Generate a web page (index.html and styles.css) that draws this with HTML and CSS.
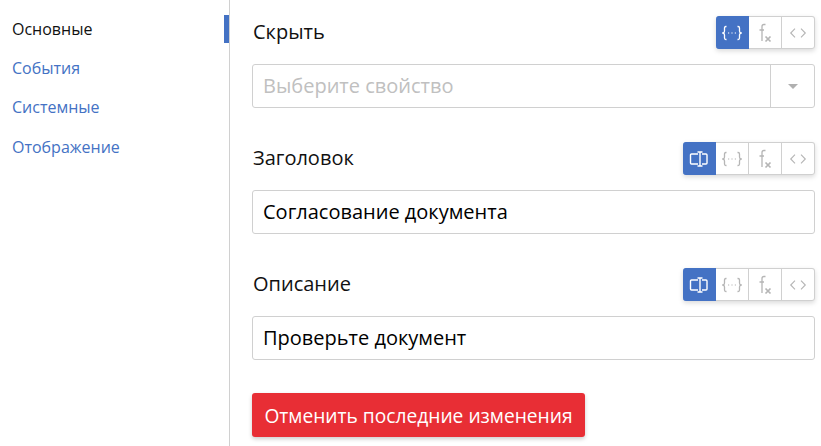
FILE: index.html
```html
<!DOCTYPE html>
<html>
<head>
    <title>Свойства</title>
    <link rel="stylesheet" href="styles.css">
</head>
<body>
    <svg class="icon-defs" width="0" height="0">
        <symbol id="icon-text" viewBox="0 0 20 16">
            <path d="M9 3H2.500a1 1 0 0 0-1 1v8a1 1 0 0 0 1 1H9M13 3h4a1 1 0 0 1 1 1v8a1 1 0 0 1-1 1h-4M8.500 1h5M8.500 15h5M11 1v14" fill="none" stroke="currentColor" stroke-width="1.400"/>
        </symbol>
        <symbol id="icon-var" viewBox="0 0 20 16">
            <path d="M4.500 1.500H3.900C2.900 1.500 2.500 2 2.500 3v3c0 1-.4 1.700-1.500 2 1.100.3 1.500 1 1.500 2v3c0 1 .4 1.500 1.400 1.500h.6M15.500 1.500h.6c1 0 1.400.5 1.400 1.500v3c0 1 .4 1.700 1.500 2-1.100.3-1.500 1-1.500 2v3c0 1-.4 1.500-1.400 1.500h-.6" fill="none" stroke="currentColor" stroke-width="1.300"/>
            <path d="M6 8h1.200M9.400 8h1.200M12.800 8h1.200" fill="none" stroke="currentColor" stroke-width="1.200"/>
        </symbol>
        <symbol id="icon-fx" viewBox="0 0 20 20">
            <path d="M10.500 1.500H9C7.500 1.500 7 2.300 7 3.500V18M4.500 7H9" fill="none" stroke="currentColor" stroke-width="1.300"/>
            <path d="M10.500 13.500l5 5M15.500 13.500l-5 5" fill="none" stroke="currentColor" stroke-width="1.700"/>
        </symbol>
        <symbol id="icon-code" viewBox="0 0 20 14">
            <path d="M6.500 2L1.500 7l5 5M13.500 2l5 5-5 5" fill="none" stroke="currentColor" stroke-width="1.300"/>
        </symbol>
    </svg>

    <div class="layout">
        <nav class="sidebar">
            <a class="nav-item active">Основные</a>
            <a class="nav-item">События</a>
            <a class="nav-item">Системные</a>
            <a class="nav-item">Отображение</a>
        </nav>

        <main class="content">
            <section class="field">
                <div class="field-head">
                    <label class="field-label">Скрыть</label>
                    <div class="modes">
                        <button class="mode selected"><svg class="ico"><use href="#icon-var"/></svg></button>
                        <button class="mode"><svg class="ico ico-fx"><use href="#icon-fx"/></svg></button>
                        <button class="mode"><svg class="ico ico-code"><use href="#icon-code"/></svg></button>
                    </div>
                </div>
                <div class="select">
                    <span class="placeholder">Выберите свойство</span>
                    <span class="select-arrow"><i class="caret"></i></span>
                </div>
            </section>

            <section class="field">
                <div class="field-head">
                    <label class="field-label">Заголовок</label>
                    <div class="modes">
                        <button class="mode selected"><svg class="ico"><use href="#icon-text"/></svg></button>
                        <button class="mode"><svg class="ico"><use href="#icon-var"/></svg></button>
                        <button class="mode"><svg class="ico ico-fx"><use href="#icon-fx"/></svg></button>
                        <button class="mode"><svg class="ico ico-code"><use href="#icon-code"/></svg></button>
                    </div>
                </div>
                <div class="input">Согласование документа</div>
            </section>

            <section class="field">
                <div class="field-head">
                    <label class="field-label">Описание</label>
                    <div class="modes">
                        <button class="mode selected"><svg class="ico"><use href="#icon-text"/></svg></button>
                        <button class="mode"><svg class="ico"><use href="#icon-var"/></svg></button>
                        <button class="mode"><svg class="ico ico-fx"><use href="#icon-fx"/></svg></button>
                        <button class="mode"><svg class="ico ico-code"><use href="#icon-code"/></svg></button>
                    </div>
                </div>
                <div class="input">Проверьте документ</div>
            </section>

            <button class="reset">Отменить последние изменения</button>
        </main>
    </div>
</body>
</html>
```

FILE: styles.css
```css
html, body { height: 100%; }
body {
    margin: 0;
    background: #fff;
    color: #000;
    font-family: "Open Sans", "Noto Sans", sans-serif;
    overflow: hidden;
}
.icon-defs { display: block; height: 0; }
.layout { display: flex; height: 446px; }

.sidebar {
    width: 229px;
    flex: none;
    border-right: 1px solid #d0d0d0;
    padding-top: 15px;
}
.nav-item {
    display: block;
    height: 28px;
    line-height: 29px;
    margin-bottom: 11.200px;
    padding-left: 12px;
    font-size: 16px;
    color: #4472c4;
}
.nav-item.active {
    color: #111;
    box-shadow: inset -5px 0 0 #4472c4;
}

.content {
    flex: 1;
    padding: 16px 6px 0 22px;
    min-width: 0;
}
.field { margin-bottom: 34px; }
.field:last-of-type { margin-bottom: 33px; }
.field-head {
    display: flex;
    justify-content: space-between;
    align-items: center;
    height: 33px;
    margin-bottom: 15px;
}
.field-label {
    font-size: 20px;
    color: #111;
    padding-left: 1px;
    padding-bottom: 3px;
}

.modes {
    display: flex;
    height: 33px;
    border-radius: 3px;
    box-shadow: 0 2px 5px rgba(0, 0, 0, 0.15);
}
.mode {
    width: 33px;
    height: 33px;
    padding: 0;
    display: flex;
    align-items: center;
    justify-content: center;
    background: #fff;
    color: #b5b5b5;
    border: 1px solid #d0d0d0;
    border-left: 0;
}
.mode:last-child { border-radius: 0 3px 3px 0; }
.mode:first-child { border-radius: 3px 0 0 3px; }
.mode.selected {
    background: #4472c4;
    border-color: #4472c4;
    color: #fff;
}
.ico { width: 20px; height: 16px; }
.ico-fx { width: 20px; height: 20px; margin-top: 1px; }
.ico-code { width: 18px; height: 12px; }

.select, .input {
    height: 44px;
    box-sizing: border-box;
    border: 1px solid #d0d0d0;
    border-radius: 3px;
    font-size: 20px;
    line-height: 42px;
    padding-left: 10px;
}
.select { display: flex; justify-content: space-between; }
.placeholder { color: #c0c0c0; }
.select-arrow {
    width: 43px;
    border-left: 1px solid #d0d0d0;
    display: flex;
    align-items: center;
    justify-content: center;
}
.caret {
    width: 0;
    height: 0;
    border-left: 5px solid transparent;
    border-right: 5px solid transparent;
    border-top: 5px solid #b0b0b0;
}

.reset {
    display: block;
    height: 44px;
    width: 333px;
    padding: 0;
    border: 0;
    border-radius: 3px;
    background: #e82e35;
    color: #fff;
    font-family: inherit;
    font-size: 19.200px;
    box-shadow: 0 2px 4px rgba(0, 0, 0, 0.2);
}
```
